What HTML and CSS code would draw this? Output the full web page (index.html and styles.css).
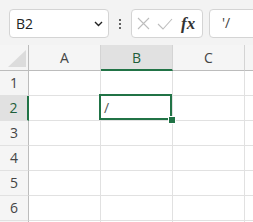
FILE: index.html
```html
<!DOCTYPE html>
<html lang="en">
<head>
    <meta charset="UTF-8">
    <title>Sheet</title>
    <link rel="stylesheet" href="styles.css">
</head>
<body>
    <!-- Formula bar -->
    <div class="toolbar">
        <div class="name-box">
            <span>B2</span>
            <svg class="chevron" width="9" height="6" viewBox="0 0 9 6"><path d="M1 1l3.5 3.5L8 1" fill="none" stroke="#222" stroke-width="1.4"/></svg>
        </div>
        <div class="grip"><i></i><i></i><i></i></div>
        <div class="fx-box">
            <svg width="13" height="13" viewBox="0 0 13 13"><path d="M1 1l11 11M12 1L1 12" stroke="#bdbdbd" stroke-width="1.1"/></svg>
            <svg width="16" height="12" viewBox="0 0 16 12"><path d="M1 6l5 5L15 1" fill="none" stroke="#bdbdbd" stroke-width="1.1"/></svg>
            <span class="fx">fx</span>
        </div>
        <div class="formula">'/</div>
    </div>

    <!-- Grid -->
    <div class="sheet">
        <div class="corner">
            <svg width="18" height="17" viewBox="0 0 18 17"><polygon points="0,17 18,17 18,0" fill="#dcdcdc"/></svg>
        </div>
        <div class="col-head">A</div>
        <div class="col-head active">B</div>
        <div class="col-head">C</div>
        <div class="col-head"></div>

        <div class="row-head">1</div>
        <div class="cell"></div><div class="cell"></div><div class="cell"></div><div class="cell"></div>

        <div class="row-head active">2</div>
        <div class="cell"></div><div class="cell selected">/</div><div class="cell"></div><div class="cell"></div>

        <div class="row-head">3</div>
        <div class="cell"></div><div class="cell"></div><div class="cell"></div><div class="cell"></div>

        <div class="row-head">4</div>
        <div class="cell"></div><div class="cell"></div><div class="cell"></div><div class="cell"></div>

        <div class="row-head">5</div>
        <div class="cell"></div><div class="cell"></div><div class="cell"></div><div class="cell"></div>

        <div class="row-head">6</div>
        <div class="cell"></div><div class="cell"></div><div class="cell"></div><div class="cell"></div>

        <div class="row-head"></div>
        <div class="cell"></div><div class="cell"></div><div class="cell"></div><div class="cell"></div>
    </div>
</body>
</html>
```

FILE: styles.css
```css
* {
    margin: 0;
    padding: 0;
    box-sizing: border-box;
}

body {
    font-family: "Open Sans", "Noto Sans", sans-serif;
    background: white;
    color: #222;
    width: 253px;
    height: 222px;
    overflow: hidden;
}

.toolbar {
    display: flex;
    align-items: flex-start;
    height: 45px;
    padding: 9px 0 0 9px;
    background: #f3f3f3;
    width: 300px;
}

.name-box {
    width: 100px;
    height: 29px;
    background: white;
    border: 1px solid #d4d4d4;
    border-radius: 4px;
    display: flex;
    align-items: center;
    justify-content: space-between;
    padding: 0 5px 0 6px;
    font-size: 14px;
    color: #222;
}

.chevron {
    margin-top: 1px;
}

.grip {
    width: 22px;
    height: 29px;
    display: flex;
    flex-direction: column;
    align-items: center;
    justify-content: center;
    gap: 2px;
}

.grip i {
    width: 2px;
    height: 2px;
    background: #333;
    border-radius: 1px;
}

.fx-box {
    width: 72px;
    height: 29px;
    background: white;
    border: 1px solid #d4d4d4;
    border-radius: 4px;
    display: flex;
    align-items: center;
    padding-left: 5px;
    gap: 7px;
}

.fx {
    font-family: "Liberation Serif", "DejaVu Serif", serif;
    font-style: italic;
    font-weight: bold;
    font-size: 17px;
    color: #333;
    margin-left: 1px;
}

.formula {
    width: 70px;
    height: 29px;
    margin-left: 6px;
    background: white;
    border: 1px solid #d4d4d4;
    border-radius: 4px;
    padding: 3px 0 0 12px;
    font-size: 14px;
    color: #444;
}

.sheet {
    display: grid;
    grid-template-columns: 29px repeat(4, 72px);
    grid-template-rows: 26px;
    grid-auto-rows: 25px;
    width: 317px;
}

.corner {
    background: #f5f5f5;
    border-right: 1px solid #bcbcbc;
    border-bottom: 1px solid #bcbcbc;
    padding: 5px 0 0 8px;
}

.col-head {
    background: #f5f5f5;
    border-right: 1px solid #d4d4d4;
    border-bottom: 1px solid #bcbcbc;
    font-size: 14px;
    color: #444;
    text-align: center;
    line-height: 25px;
}

.col-head.active {
    background: #e1e1e1;
    border-bottom: 2px solid #217346;
    color: #1e5e3a;
}

.row-head {
    background: #f5f5f5;
    border-right: 1px solid #bcbcbc;
    border-bottom: 1px solid #e1e1e1;
    font-size: 14px;
    color: #444;
    text-align: center;
    line-height: 24px;
}

.row-head.active {
    background: #e1e1e1;
    border-right: 2px solid #217346;
    color: #1e5e3a;
}

.cell {
    border-right: 1px solid #e1e1e1;
    border-bottom: 1px solid #e1e1e1;
    font-size: 14px;
    color: #555;
    line-height: 24px;
    padding-left: 3px;
}

.selected {
    position: relative;
}

.selected::before {
    content: "";
    position: absolute;
    left: -2px;
    top: -2px;
    right: 0;
    bottom: 0;
    border: 2px solid #217346;
}

.selected::after {
    content: "";
    position: absolute;
    right: -3px;
    bottom: -3px;
    width: 6px;
    height: 6px;
    background: #217346;
    box-shadow: 0 0 0 1px white;
}
```
